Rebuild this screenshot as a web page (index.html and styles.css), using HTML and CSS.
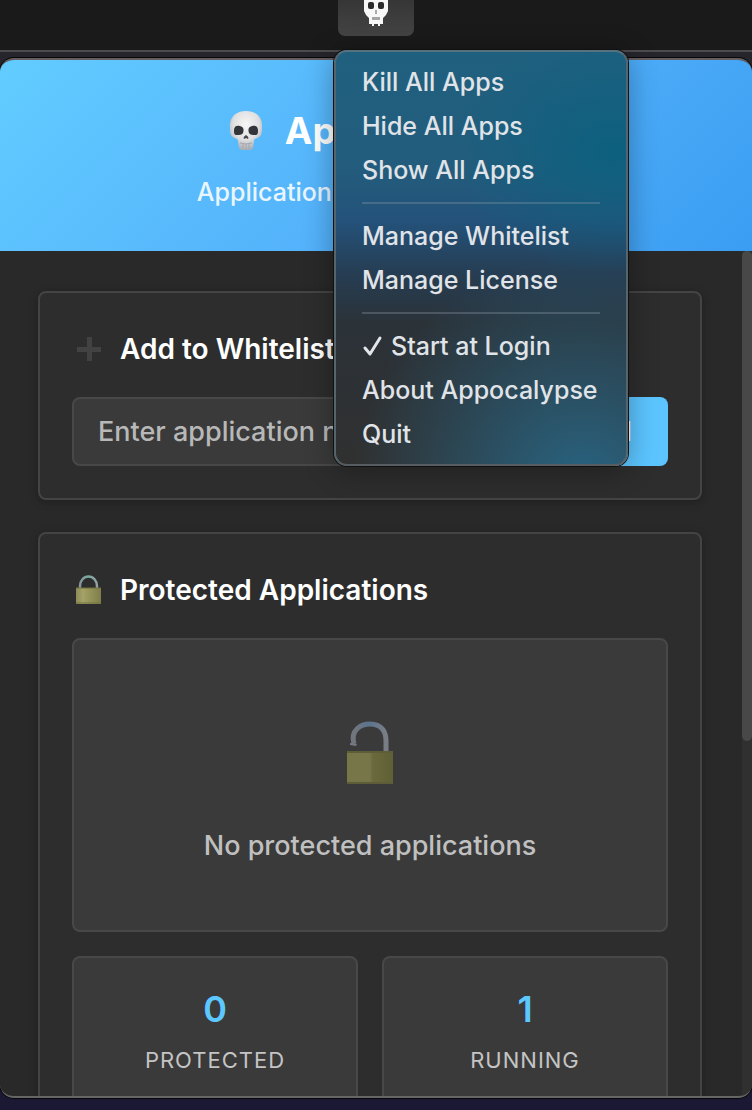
FILE: index.html
```html
<!DOCTYPE html>
<html lang="en">
<head>
<meta charset="utf-8">
<meta name="viewport" content="width=device-width, initial-scale=1">
<title>Appocalypse</title>
<link rel="stylesheet" href="styles.css">
</head>
<body>
<svg class="defs" width="0" height="0" aria-hidden="true">
  <defs>
    <radialGradient id="bone" cx=".5" cy=".35" r=".65"><stop offset="0" stop-color="#f6f6f6"/><stop offset=".6" stop-color="#e0e0e2"/><stop offset="1" stop-color="#aaaeb6"/></radialGradient>
    <linearGradient id="brass" x1="0" x2="1"><stop offset="0" stop-color="#8c8b58"/><stop offset=".28" stop-color="#a5a268"/><stop offset=".5" stop-color="#99965c"/><stop offset="1" stop-color="#7e7e4b"/></linearGradient>
    <linearGradient id="brass-dim" x1="0" x2="1"><stop offset="0" stop-color="#777647"/><stop offset=".5" stop-color="#77764a"/><stop offset=".56" stop-color="#69693c"/><stop offset="1" stop-color="#606036"/></linearGradient>
    <linearGradient id="steel" x1="0" x2="1"><stop offset="0" stop-color="#8a949b"/><stop offset=".5" stop-color="#78aaa4"/><stop offset="1" stop-color="#95a0a4"/></linearGradient>
    <linearGradient id="steel-dim" x1="0" x2="1"><stop offset="0" stop-color="#73757c"/><stop offset=".5" stop-color="#5b748e"/><stop offset="1" stop-color="#7b7d86"/></linearGradient>
  </defs>
</svg>

<nav class="menubar" aria-label="Menu bar">
  <div class="status">
    <button class="status-button" aria-label="Appocalypse menu" aria-expanded="true">
      <svg width="26" height="26" viewBox="0 0 26 26" aria-hidden="true">
        <path fill="#f7f7f7" d="M1-2h24v13l-2 4-3 3v6h-3v2h-2v-2h-4v2H9v-2H6v-6l-3-3-2-4z"/>
        <rect x="5" y="2" width="6" height="7" rx="2" fill="#2b2b2b"/><rect x="15" y="2" width="6" height="7" rx="2" fill="#2b2b2b"/>
        <path d="M12 10h2v4h-2z" fill="#aaa"/><path d="M9 17h8v3H9z" fill="#a5a5a5"/>
      </svg>
    </button>
    <div class="menu" role="menu">
      <button role="menuitem">Kill All Apps</button>
      <button role="menuitem">Hide All Apps</button>
      <button role="menuitem">Show All Apps</button>
      <hr>
      <button role="menuitem">Manage Whitelist</button>
      <button role="menuitem">Manage License</button>
      <hr>
      <button role="menuitemcheckbox" aria-checked="true"><svg width="22" height="22" viewBox="0 0 22 22" aria-hidden="true"><path d="M3 13l5 6L18 3" fill="none" stroke="#e3e6e8" stroke-width="3" stroke-linecap="round" stroke-linejoin="round"/></svg>Start at Login</button>
      <button role="menuitem">About Appocalypse</button>
      <button role="menuitem">Quit</button>
    </div>
  </div>
</nav>

<div class="window">
  <header class="hero">
    <h1>
      <svg width="36" height="42" viewBox="0 0 36 42" aria-hidden="true">
        <path fill="url(#bone)" d="M2 18C1 7 8 1 18 1s17 6 16 17c0 4 0 7-3 9-2 2-5 1-5 4l-1 7q-1 2-4 2h-6q-3 0-4-2l-1-7c0-3-3-2-5-4-3-2-3-5-3-9z"/>
        <path fill="#34353a" d="M6 20c0-4 3-5 6-4 4 1 4 4 3 7-1 2-4 2-6 2-3 0-3-2-3-5zM30 20c0-4-3-5-6-4-4 1-4 4-3 7 1 2 4 2 6 2 3 0 3-2 3-5z"/>
        <path fill="#45454a" d="M18 25c2 1 3 3 2 4l-2-1-2 1c-1-1 0-3 2-4z"/>
        <path fill="none" stroke="#a5a6ab" d="M12 33q6 2 12 0M15 33v6M18 34v6M21 33v6"/>
      </svg>
      <span>Appocalypse</span>
    </h1>
    <p>Application Whitelist Manager</p>
  </header>

  <div class="viewport">
    <main class="content">
      <section class="card">
        <h2><span class="icon"><svg width="26" height="26" viewBox="0 0 26 26" aria-hidden="true"><path d="M11 1h5v10h9v5h-9v9h-5v-9H1v-5h10z" fill="#424242"/></svg></span>Add to Whitelist</h2>
        <form class="add-form">
          <input type="text" aria-label="Application name" placeholder="Enter application name">
          <button type="button">Add</button>
        </form>
      </section>

      <section class="card">
        <h2><span class="icon"><svg width="26" height="30" viewBox="0 0 26 30" aria-hidden="true"><path d="M4 14V11a8 9 0 0 1 17 0v3" fill="none" stroke="url(#steel)" stroke-width="2.5"/><rect x="0" y="13" width="25" height="16" fill="url(#brass)"/><path d="M0 28h25M0 13h25" stroke="#71713f"/></svg></span>Protected Applications</h2>
        <div class="empty">
          <svg width="50" height="66" viewBox="0 0 50 66" aria-hidden="true"><path d="M9 24C5 10 16 4 25 4c12 0 16 8 16 17v10" fill="none" stroke="url(#steel-dim)" stroke-width="5"/><path d="M5 23l7 1-1 2-6-1z" fill="#777981"/><rect x="2" y="31" width="46" height="33" fill="url(#brass-dim)"/><path d="M2 32h46M2 63h46" stroke="#5d5d38" stroke-width="2"/></svg>
          <p>No protected applications</p>
        </div>
        <div class="stats">
          <div class="stat"><strong>0</strong><span>Protected</span></div>
          <div class="stat"><strong>1</strong><span>Running</span></div>
        </div>
      </section>
    </main>
    <div class="scrollbar"><div class="thumb"></div></div>
  </div>
</div>
</body>
</html>
```
FILE: styles.css
```css
* { box-sizing: border-box; }

body {
  margin: 0;
  height: 100vh;
  overflow: hidden;
  display: flex;
  flex-direction: column;
  padding-bottom: 12px;
  background: linear-gradient(#26252b 60px, #1a1833 100%);
  color: #fff;
  font-family: Inter, "Open Sans", sans-serif;
}

button, input { font: inherit; color: inherit; border: 0; margin: 0; }
.defs { position: absolute; }
h1, h2, p { margin: 0; }

.menubar {
  display: flex;
  justify-content: center;
  height: 52px;
  flex: none;
  background: #1a1a1b;
  border-bottom: 2px solid #4d4b4e;
}

.status { position: relative; z-index: 2; height: 36px; }
.status-button {
  display: flex;
  justify-content: center;
  width: 76px;
  height: 36px;
  padding: 0;
  border-radius: 0 0 7px 7px;
  background: linear-gradient(#363637, #444445);
}

.menu {
  position: absolute;
  top: 50px;
  left: -4px;
  width: 294px;
  padding: 8px 26px;
  border: 2px solid #57727f;
  border-color: #57727f #56646c #565c60;
  border-radius: 13px;
  background:
    radial-gradient(circle at 85% 105%, #286482 0, #28648200 46%),
    radial-gradient(ellipse 55% 30% at 95% 24%, #0d607f 0, #0d607f00 100%),
    linear-gradient(#20607f 0, #235c7c 28%, #24527a 41%, #263d52 54%, #2b3238 66%, #303030 100%);
  box-shadow: 0 0 0 1px #111, 0 4px 30px #0005;
}
.menu button {
  display: flex;
  align-items: center;
  gap: 7px;
  width: 100%;
  height: 44px;
  padding: 0;
  background: none;
  color: #e0e4e8;
  font-size: 25px;
  font-weight: 500;
  text-align: left;
  white-space: nowrap;
}
.menu hr {
  height: 2px;
  margin: 10px 0;
  border: 0;
  background: #8c9ca855;
}

.window {
  flex: 1;
  min-height: 0;
  display: flex;
  flex-direction: column;
  margin-top: 6px;
  overflow: hidden;
  border-top: 2px solid #665d60;
  border-bottom: 2px solid #666;
  border-radius: 14px;
  background: #292929;
  box-shadow: 0 0 0 1px #080808;
}

.hero {
  flex: none;
  height: 191px;
  padding: 46px 24px;
  background: linear-gradient(135deg, #62ccff, #54b3fb 50%, #3b9df2);
  text-align: center;
}
h1 {
  display: flex;
  align-items: center;
  justify-content: center;
  gap: 21px;
  font-size: 37px;
  line-height: 50px;
}
.hero p { margin-top: 18px; font-size: 25px; font-weight: 500; line-height: 36px; color: #eaf6ff; }

.viewport { flex: 1; min-height: 0; display: flex; }
.content {
  flex: 1;
  min-width: 0;
  overflow: hidden;
  display: flex;
  flex-direction: column;
  gap: 32px;
  padding: 40px 40px 0 38px;
}
.card {
  flex: none;
  padding: 32px;
  border: 2px solid #444;
  border-radius: 8px;
  background: #2d2d2d;
  box-shadow: 0 2px 8px #0004;
}
h2 {
  display: flex;
  align-items: center;
  gap: 14px;
  margin-bottom: 24px;
  font-size: 28px;
  font-weight: 600;
  line-height: 48px;
}
.icon { display: flex; justify-content: center; width: 34px; }

.add-form { display: flex; gap: 16px; }
.add-form input {
  flex: 1;
  min-width: 0;
  height: 69px;
  padding: 0 24px;
  border: 2px solid #484848;
  border-radius: 8px;
  background: #3a3a3a;
  font-size: 27px;
  font-weight: 500;
}
.add-form input::placeholder { color: #b8b8b8; opacity: 1; }
.add-form button {
  padding: 0 36px;
  border-radius: 8px;
  background: #5cc5ff;
  font-size: 27px;
  font-weight: 500;
}

.empty {
  display: flex;
  flex-direction: column;
  align-items: center;
  gap: 40px;
  padding: 80px 24px 64px;
  border: 2px solid #484848;
  border-radius: 8px;
  background: #3a3a3a;
}
.empty p { font-size: 27px; font-weight: 500; line-height: 40px; color: #c0c0c0; }

.stats { display: grid; grid-template-columns: 1fr 1fr; gap: 24px; margin-top: 24px; }
.stat {
  display: flex;
  flex-direction: column;
  align-items: center;
  gap: 14px;
  padding: 28px 16px;
  border: 2px solid #484848;
  border-radius: 8px;
  background: #3a3a3a;
}
.stat strong { font-size: 36px; font-weight: 600; line-height: 46px; color: #5cc8ff; }
.stat span { font-size: 22px; line-height: 28px; letter-spacing: 1px; text-transform: uppercase; color: #c4c4c4; }

.scrollbar { flex: none; width: 10px; background: #303030; }
.thumb { height: 58%; border-radius: 5px; background: #484848; }
```
